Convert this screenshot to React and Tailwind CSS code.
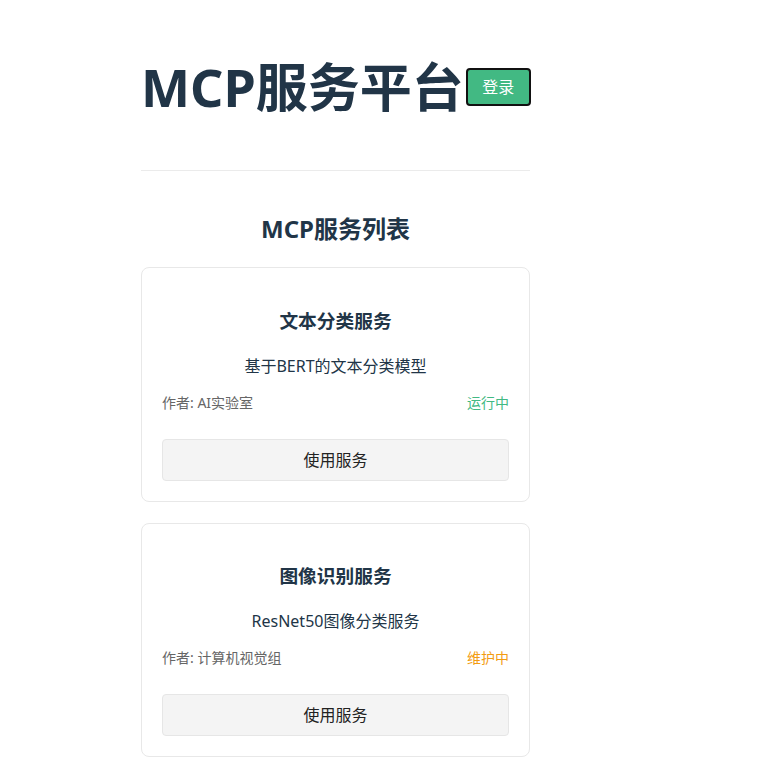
const services = [
  {
    name: "文本分类服务",
    desc: "基于BERT的文本分类模型",
    author: "AI实验室",
    status: "运行中",
    statusClass: "text-[#42b983]",
  },
  {
    name: "图像识别服务",
    desc: "ResNet50图像分类服务",
    author: "计算机视觉组",
    status: "维护中",
    statusClass: "text-[#f39c12]",
  },
];

function ServiceCard({ service }) {
  return (
    <div className="mb-[21px] rounded-lg border border-[#e8e8e8] bg-white p-5 text-center">
      <h3 className="mt-[18.72px] text-[18.72px] font-bold leading-[1.5] text-[#213547]">
        {service.name}
      </h3>
      <p className="mt-[18.72px] text-base leading-6 text-[#213547]">{service.desc}</p>
      <div className="mt-[14px] flex items-center justify-between text-sm leading-[21px]">
        <span className="text-[#666]">作者: {service.author}</span>
        <span className={service.statusClass}>{service.status}</span>
      </div>
      <button
        type="button"
        className="mt-[26px] h-[42px] w-full rounded border border-[#e6e6e6] bg-[#f4f4f4] text-base text-[#222]"
      >
        使用服务
      </button>
    </div>
  );
}

export default function App() {
  return (
    <div
      className="min-h-screen bg-white"
      style={{ fontFamily: '"Noto Sans", "Noto Sans CJK SC", sans-serif' }}
    >
      <div className="ml-[141px] w-[389px] pt-[58px]">
        <header className="flex items-center whitespace-nowrap">
          <h1 className="shrink-0 text-[52px] font-bold leading-[1.1] text-[#213547]">
            MCP服务平台
          </h1>
          <button
            type="button"
            className="ml-[2px] h-[38px] w-[65px] shrink-0 rounded border-2 border-[#111] bg-[#42b983] text-base text-white"
          >
            登录
          </button>
        </header>

        <hr className="mt-[55px] border-t border-[#ebebeb]" />

        <h2 className="mt-[40px] text-center text-2xl font-bold leading-9 text-[#213547]">
          MCP服务列表
        </h2>

        <div className="mt-5">
          {services.map((s) => (
            <ServiceCard key={s.name} service={s} />
          ))}
        </div>
      </div>
    </div>
  );
}
